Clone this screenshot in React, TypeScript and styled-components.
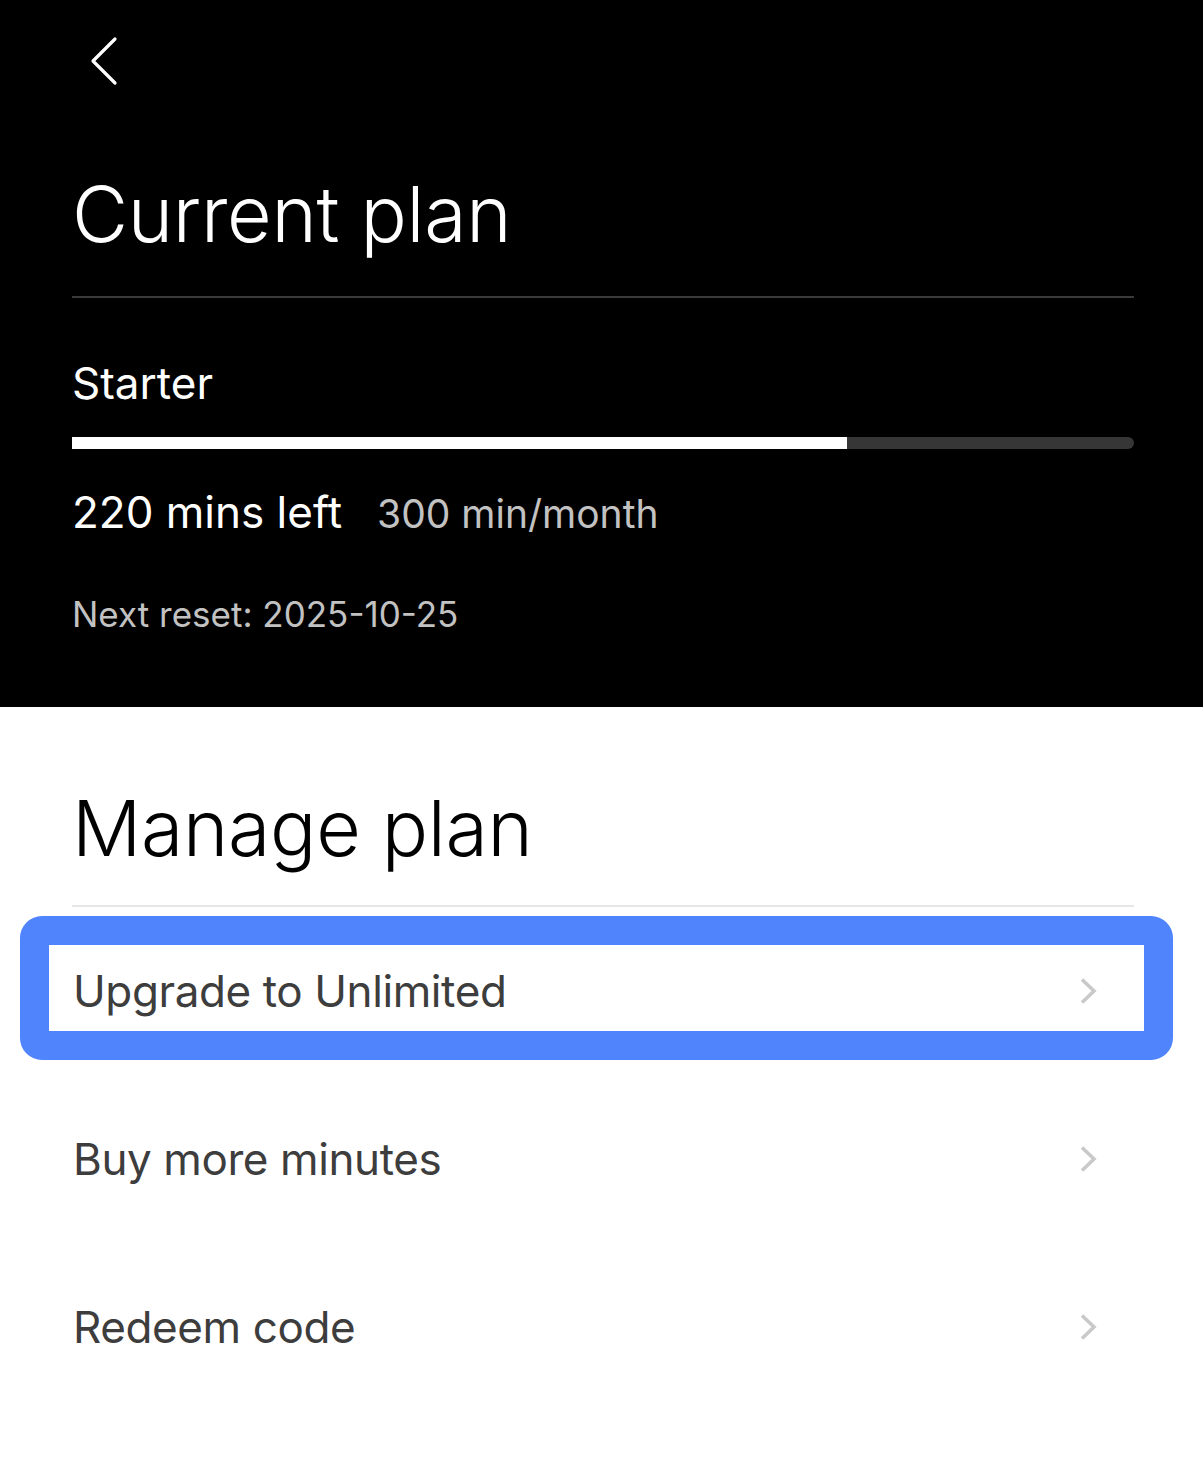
import styled, { createGlobalStyle } from "styled-components"

const GlobalStyle = createGlobalStyle`
    html, body {
        margin: 0;
        padding: 0;
        background: #ffffff;
    }

    body {
        font-family: Inter, "Noto Sans", "Liberation Sans", sans-serif;
        -webkit-font-smoothing: antialiased;
    }
`

const palette = {
    black: "#000000",
    white: "#ffffff",
    track: "#363636",
    darkLine: "#3a3a3a",
    lightLine: "#e6e6e6",
    muted: "#c2c2c2",
    rowText: "#3d3d3d",
    chevron: "#c9c9c9",
    highlight: "#4f84fc",
}

const Page = styled.div`
    width: 1203px;
    min-height: 1463px;
    background: ${palette.white};
`

const Header = styled.header`
    background: ${palette.black};
    height: 707px;
    box-sizing: border-box;
    padding: 0 69px 0 72px;
    display: flex;
    flex-direction: column;
`

const BackBar = styled.div`
    height: 120px;
    display: flex;
    align-items: flex-start;
`

const BackButton = styled.button`
    margin: 36px 0 0 18px;
    padding: 0;
    border: none;
    background: none;
    width: 30px;
    height: 50px;
    cursor: pointer;
`

const PageTitle = styled.h1<{ $light?: boolean }>`
    margin: 0;
    font-size: 77px;
    line-height: 77px;
    font-weight: 300;
    letter-spacing: -0.3px;
    color: ${({ $light }) => ($light ? palette.white : palette.black)};
`

const Divider = styled.div<{ $dark?: boolean }>`
    height: 1.5px;
    background: ${({ $dark }) => ($dark ? palette.darkLine : palette.lightLine)};
`

const PlanName = styled.div`
    font-size: 44px;
    line-height: 44px;
    font-weight: 400;
    color: ${palette.white};
`

const Track = styled.div`
    height: 12px;
    background: ${palette.track};
    border-radius: 0 6px 6px 0;
`

const Fill = styled.div`
    height: 100%;
    background: ${palette.white};
`

const UsageRow = styled.div`
    display: flex;
    align-items: baseline;
    gap: 35px;
`

const MinsLeft = styled.span`
    font-size: 44px;
    line-height: 44px;
    color: ${palette.white};
`

const Quota = styled.span`
    font-size: 39px;
    line-height: 44px;
    color: ${palette.muted};
`

const ResetText = styled.div`
    font-size: 35px;
    line-height: 36px;
    color: ${palette.muted};
`

const Main = styled.main`
    padding: 0 69px 0 72px;
    display: flex;
    flex-direction: column;
`

const RowList = styled.div`
    display: flex;
    flex-direction: column;
    gap: 82px;
    margin: 38px -10px 0 -23px;
`

const Row = styled.button<{ $selected?: boolean }>`
    position: relative;
    height: 86px;
    box-sizing: border-box;
    padding: 6px 47px 0 24px;
    display: flex;
    align-items: center;
    justify-content: space-between;
    border: none;
    background: ${palette.white};
    font-family: inherit;
    font-size: 44px;
    letter-spacing: -0.4px;
    color: ${palette.rowText};
    text-align: left;
    cursor: pointer;

    ${({ $selected }) =>
        $selected &&
        `
        &::before {
            content: "";
            position: absolute;
            inset: -29px;
            border: 29px solid ${palette.highlight};
            border-radius: 22px;
            pointer-events: none;
        }
    `}
`

const BackIcon = () => (
    <svg width="30" height="50" viewBox="0 0 30 50" fill="none">
        <polyline
            points="25,3 3,25 25,47"
            stroke={palette.white}
            strokeWidth="3.2"
            strokeLinecap="round"
            strokeLinejoin="round"
        />
    </svg>
)

const Chevron = () => (
    <svg width="18" height="28" viewBox="0 0 18 28" fill="none">
        <polyline
            points="3,2.5 15,14 3,25.5"
            stroke={palette.chevron}
            strokeWidth="3.6"
        />
    </svg>
)

const plan = { name: "Starter", total: 300, left: 220, reset: "2025-10-25" }

const actions = ["Upgrade to Unlimited", "Buy more minutes", "Redeem code"]

export default function App() {
    const used = Math.floor((plan.left / plan.total) * 100)
    return (
        <Page>
            <GlobalStyle />
            <Header>
                <BackBar>
                    <BackButton aria-label="Back">
                        <BackIcon />
                    </BackButton>
                </BackBar>
                <PageTitle $light style={{ marginTop: 56 }}>Current plan</PageTitle>
                <Divider $dark style={{ marginTop: 43 }} />
                <PlanName style={{ marginTop: 63 }}>{plan.name}</PlanName>
                <Track style={{ marginTop: 32 }}>
                    <Fill style={{ width: `${used}%` }} />
                </Track>
                <UsageRow style={{ marginTop: 41 }}>
                    <MinsLeft>{plan.left} mins left</MinsLeft>
                    <Quota>{plan.total} min/month</Quota>
                </UsageRow>
                <ResetText style={{ marginTop: 60 }}>Next reset: {plan.reset}</ResetText>
            </Header>
            <Main>
                <PageTitle style={{ marginTop: 83 }}>Manage plan</PageTitle>
                <Divider style={{ marginTop: 38 }} />
                <RowList>
                    {actions.map((label, i) => (
                        <Row key={label} $selected={i === 0}>
                            <span>{label}</span>
                            <Chevron />
                        </Row>
                    ))}
                </RowList>
            </Main>
        </Page>
    )
}
